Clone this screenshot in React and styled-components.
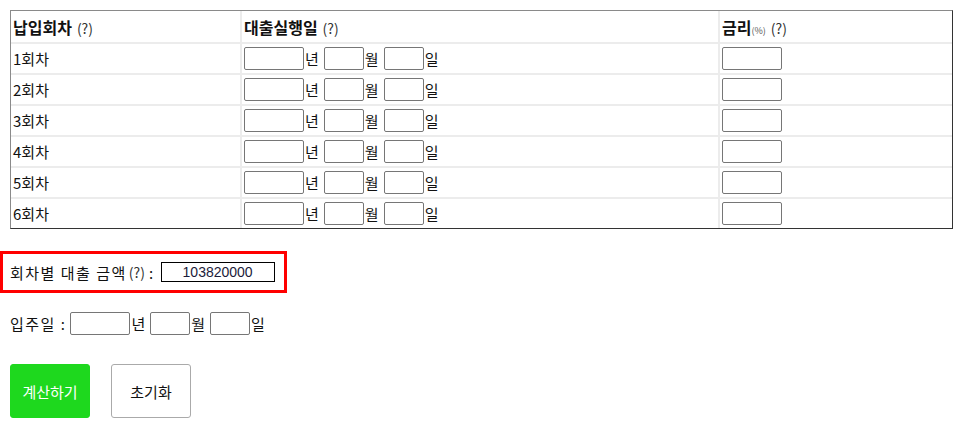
import React from 'react'
import { styled, createGlobalStyle } from 'styled-components'

const Global = createGlobalStyle`
  body {
    margin: 0;
    background: #ffffff;
    font-family: "Noto Sans CJK KR", "Noto Sans", sans-serif;
    color: #111111;
  }
`

const Page = styled.div`
  padding: 10px;
`

const Table = styled.table`
  width: 943px;
  table-layout: fixed;
  border-spacing: 0;
  border: 1px solid;
  border-color: #8a8a8a #333333 #333333 #8a8a8a;
  font-size: 15px;
`

const Cell = styled.td`
  height: ${(p) => (p.$head ? '31px' : '29px')};
  padding: 0 1px 0 2px;
  border-right: 2px solid #ececec;
  border-bottom: 2px solid #ececec;
  white-space: nowrap;
  vertical-align: middle;
  line-height: 1;
  tr:last-child > & {
    border-bottom: none;
  }
  &:last-child {
    border-right: none;
  }
`

const HeadLabel = styled.b`
  font-size: 16px;
  font-weight: 700;
`

const Help = styled.span`
  font-size: 14px;
  color: #333333;
  margin-left: 5px;
  letter-spacing: 0;
`

const Unit = styled.span`
  font-size: 9px;
  color: #555555;
`

const DateInput = styled.input`
  box-sizing: border-box;
  width: ${(p) => (p.$wide ? '60px' : '40px')};
  height: 23px;
  margin: 0;
  padding: 0 2px;
  border: 1px solid #767676;
  border-radius: 2px;
  background: #ffffff;
  vertical-align: middle;
  font: inherit;
`

const Suffix = styled.span`
  display: inline-block;
  margin: 0 5px 0 1px;
  vertical-align: middle;
  font-size: 15px;
  letter-spacing: 0;
`

const AmountBox = styled.div`
  display: flex;
  align-items: center;
  width: fit-content;
  height: 36px;
  margin: 22px 0 0 -10px;
  padding: 0 9px 0 7px;
  border: 3px solid #ff0000;
  font-size: 15px;
  letter-spacing: 1.5px;
`

const AmountInput = styled.input`
  box-sizing: border-box;
  width: 114px;
  height: 20px;
  margin-left: 6px;
  padding: 0;
  border: 1px solid #000000;
  text-align: center;
  font-family: "Liberation Sans", Arial, sans-serif;
  font-size: 14px;
  color: #1b1b3a;
  letter-spacing: 0;
`

const MoveRow = styled.div`
  display: flex;
  align-items: center;
  margin-top: 19px;
  font-size: 15px;
`

const MoveLabel = styled.span`
  margin-right: 4px;
  letter-spacing: 1.5px;
`

const Buttons = styled.div`
  display: flex;
  gap: 21px;
  margin-top: 29px;
`

const Button = styled.button`
  width: 80px;
  height: 54px;
  border-radius: 3px;
  border: 1px solid ${(p) => (p.$primary ? '#1ed81e' : '#aaaaaa')};
  background: ${(p) => (p.$primary ? '#1ed81e' : '#ffffff')};
  color: ${(p) => (p.$primary ? '#ffffff' : '#111111')};
  font-family: inherit;
  font-size: 15px;
  padding: 0;
`

const DateFields = () => (
  <>
    <DateInput $wide />
    <Suffix>년</Suffix>
    <DateInput />
    <Suffix>월</Suffix>
    <DateInput />
    <Suffix>일</Suffix>
  </>
)

const rounds = [1, 2, 3, 4, 5, 6]

export default function App() {
  return (
    <Page>
      <Global />
      <Table>
        <colgroup>
          <col style={{ width: 231 }} />
          <col style={{ width: 478 }} />
          <col />
        </colgroup>
        <tbody>
          <tr>
            <Cell $head>
              <HeadLabel>납입회차</HeadLabel>
              <Help>(?)</Help>
            </Cell>
            <Cell $head>
              <HeadLabel>대출실행일</HeadLabel>
              <Help>(?)</Help>
            </Cell>
            <Cell $head>
              <HeadLabel>금리</HeadLabel>
              <Unit>(%)</Unit>
              <Help>(?)</Help>
            </Cell>
          </tr>
          {rounds.map((n) => (
            <tr key={n}>
              <Cell>{n}회차</Cell>
              <Cell>
                <DateFields />
              </Cell>
              <Cell>
                <DateInput $wide />
              </Cell>
            </tr>
          ))}
        </tbody>
      </Table>

      <AmountBox>
        회차별 대출 금액 <Help style={{ margin: '0 4px 0 2px' }}>(?)</Help>:
        <AmountInput defaultValue="103820000" />
      </AmountBox>

      <MoveRow>
        <MoveLabel>입주일 :</MoveLabel>
        <DateFields />
      </MoveRow>

      <Buttons>
        <Button $primary>계산하기</Button>
        <Button>초기화</Button>
      </Buttons>
    </Page>
  )
}
